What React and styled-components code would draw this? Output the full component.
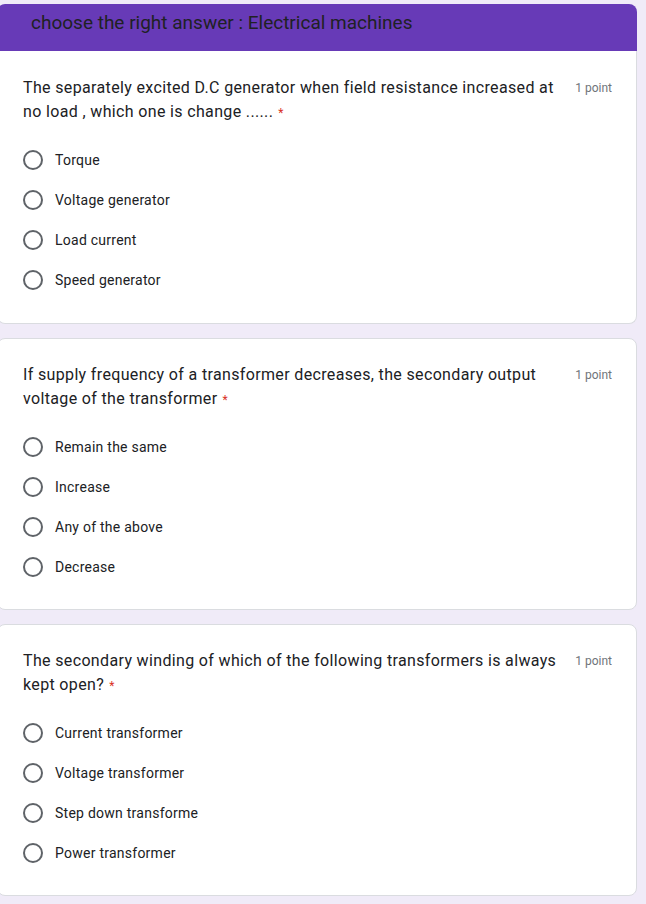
import React from "react";
import styled, { createGlobalStyle } from "styled-components";

const Global = createGlobalStyle`
  html, body { margin: 0; padding: 0; background: #f0ebf8; }
  body { font-family: Roboto, "Noto Sans", Arial, sans-serif; color: #202124; }
`;

const Page = styled.div`
  display: flex;
  flex-direction: column;
  gap: 14px;
  width: 640px;
  margin: 4px 0 0 -3px;
  padding-bottom: 8px;
`;

const FirstBlock = styled.div`
  display: flex;
  flex-direction: column;
`;

const Header = styled.div`
  background: #673ab7;
  height: 47px;
  border-radius: 8px 8px 0 0;
  display: flex;
  align-items: flex-start;
  padding: 8px 0 0 34px;
  box-sizing: border-box;
`;

const Title = styled.h1`
  margin: 0;
  font-family: Roboto, "Noto Sans", sans-serif;
  font-weight: 400;
  font-size: 19px;
  line-height: 22px;
  color: #202124;
`;

const Card = styled.section`
  background: #fff;
  border: 1px solid #dadce0;
  border-top: ${(p) => (p.$attached ? "none" : "1px solid #dadce0")};
  border-radius: ${(p) => (p.$attached ? "0 0 8px 8px" : "8px")};
  padding: ${(p) => (p.$attached ? "25px" : "24px")} 24px 23px 25px;
  box-sizing: border-box;
  height: ${(p) => p.$h}px;
`;

const QuestionRow = styled.div`
  display: flex;
  justify-content: space-between;
  align-items: flex-start;
  gap: 12px;
`;

const QuestionText = styled.div`
  font-size: 16px;
  letter-spacing: 0.35px;
  line-height: 24px;
  color: #202124;
  max-width: 545px;

  &::after {
    content: "*";
    color: #d93025;
    font-size: 12px;
    margin-left: 5px;
  }
`;

const Points = styled.div`
  font-size: 12px;
  line-height: 24px;
  color: #70757a;
  white-space: nowrap;
`;

const Options = styled.div`
  display: flex;
  flex-direction: column;
  margin-top: 15px;
`;

const Option = styled.label`
  display: flex;
  align-items: center;
  height: 40px;
  gap: 12px;
  font-size: 14px;
  letter-spacing: 0.25px;
  color: #202124;
`;

const Radio = styled.span`
  width: 20px;
  height: 20px;
  border: 2px solid #5f6368;
  border-radius: 50%;
  box-sizing: border-box;
  flex: none;
`;

const questions = [
  {
    text: "The separately excited D.C generator when field resistance increased at no load , which one is change ......",
    options: ["Torque", "Voltage generator", "Load current", "Speed generator"],
  },
  {
    text: "If supply frequency of a transformer decreases, the secondary output voltage of the transformer",
    options: ["Remain the same", "Increase", "Any of the above", "Decrease"],
  },
  {
    text: "The secondary winding of which of the following transformers is always kept open?",
    options: ["Current transformer", "Voltage transformer", "Step down transforme", "Power transformer"],
  },
];

function Question({ q, attached }) {
  return (
    <Card $attached={attached} $h={attached ? 273 : 272}>
      <QuestionRow>
        <QuestionText>{q.text}</QuestionText>
        <Points>1 point</Points>
      </QuestionRow>
      <Options>
        {q.options.map((o) => (
          <Option key={o}>
            <Radio />
            {o}
          </Option>
        ))}
      </Options>
    </Card>
  );
}

export default function App() {
  return (
    <>
      <Global />
      <Page>
        <FirstBlock>
          <Header>
            <Title>choose the right answer : Electrical machines</Title>
          </Header>
          <Question q={questions[0]} attached />
        </FirstBlock>
        <Question q={questions[1]} />
        <Question q={questions[2]} />
      </Page>
    </>
  );
}
